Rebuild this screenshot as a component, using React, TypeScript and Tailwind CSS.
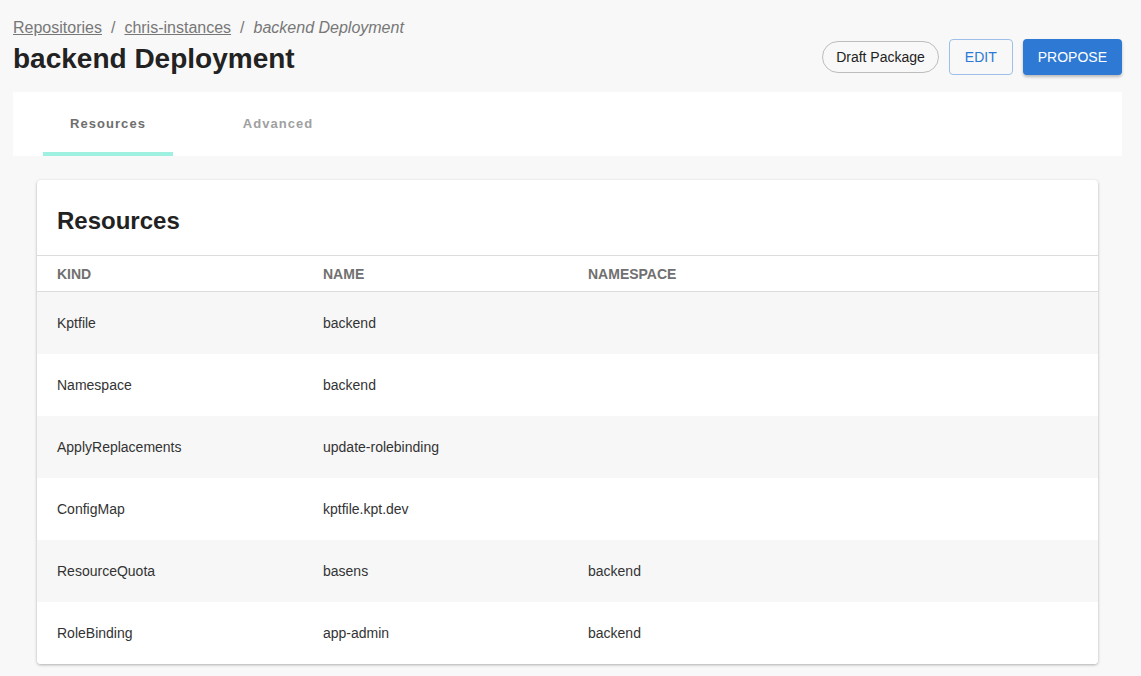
import React from "react";

interface ResourceRow {
  kind: string;
  name: string;
  namespace: string;
}

const rows: ResourceRow[] = [
  { kind: "Kptfile", name: "backend", namespace: "" },
  { kind: "Namespace", name: "backend", namespace: "" },
  { kind: "ApplyReplacements", name: "update-rolebinding", namespace: "" },
  { kind: "ConfigMap", name: "kptfile.kpt.dev", namespace: "" },
  { kind: "ResourceQuota", name: "basens", namespace: "backend" },
  { kind: "RoleBinding", name: "app-admin", namespace: "backend" },
];

export default function App() {
  return (
    <div className="min-h-[676px] bg-[#f8f8f8] pl-[13px] pr-[19px] pt-[18px] font-['Liberation_Sans',Arial,sans-serif] text-[#222]">
      <div className="flex items-end justify-between">
        <div>
          <div className="flex items-center gap-[9px] text-[16px] leading-[20px] text-[#777]">
            <a className="underline">Repositories</a>
            <span>/</span>
            <a className="underline">chris-instances</a>
            <span>/</span>
            <span className="italic">backend Deployment</span>
          </div>
          <h1 className="mt-[3px] text-[28px] font-bold leading-[36px] text-[#222]">backend Deployment</h1>
        </div>
        <div className="mb-[2px] flex items-center gap-[10px]">
          <span className="flex h-[32px] items-center rounded-full border border-[#bdbdbd] px-[13px] text-[14px] text-[#222]">
            Draft Package
          </span>
          <button className="h-[36px] rounded-[4px] border border-[#9cc0ea] px-[15px] text-[14px] font-medium text-[#2d79d4]">
            EDIT
          </button>
          <button className="h-[36px] rounded-[4px] bg-[#2d79d4] px-[15px] text-[14px] font-medium text-white shadow-[0_2px_3px_rgba(0,0,0,0.25)]">
            PROPOSE
          </button>
        </div>
      </div>

      <div className="mt-[15px] flex h-[64px] bg-white pl-[30px]">
        <div className="flex w-[130px] flex-col">
          <div className="flex flex-1 items-center justify-center pt-[4px] text-[13px] font-bold tracking-[0.08em] text-[#6e6e6e]">
            Resources
          </div>
          <div className="h-[4px] bg-[#9ef0e0]" />
        </div>
        <div className="ml-[40px] flex w-[130px] flex-col">
          <div className="flex flex-1 items-center justify-center pt-[4px] text-[13px] font-bold tracking-[0.08em] text-[#a0a0a0]">
            Advanced
          </div>
          <div className="h-[4px]" />
        </div>
      </div>

      <div className="mx-6 mt-[24px] overflow-hidden rounded-[4px] bg-white shadow-[0_1px_3px_rgba(0,0,0,0.3)]">
        <h2 className="px-[20px] pb-[19px] pt-[26px] text-[24px] font-bold leading-[30px] text-[#222]">Resources</h2>
        <table className="w-full table-fixed border-collapse text-left">
          <thead>
            <tr className="h-[36px] border-y border-[#dcdcdc]">
              <th className="w-[286px] p-0 pl-[20px] pt-[2px] text-[14px] font-bold text-[#707070]">KIND</th>
              <th className="w-[265px] p-0 pt-[2px] text-[14px] font-bold text-[#707070]">NAME</th>
              <th className="p-0 pt-[2px] text-[14px] font-bold text-[#707070]">NAMESPACE</th>
            </tr>
          </thead>
          <tbody>
            {rows.map((row, index) => (
              <tr key={index} className={index % 2 === 0 ? "h-[62px] bg-[#f7f7f7]" : "h-[62px] bg-white"}>
                <td className="pl-[20px] pt-[2px] text-[14px] text-[#333]">{row.kind}</td>
                <td className="pt-[2px] text-[14px] text-[#333]">{row.name}</td>
                <td className="pt-[2px] text-[14px] text-[#333]">{row.namespace}</td>
              </tr>
            ))}
          </tbody>
        </table>
      </div>
    </div>
  );
}
